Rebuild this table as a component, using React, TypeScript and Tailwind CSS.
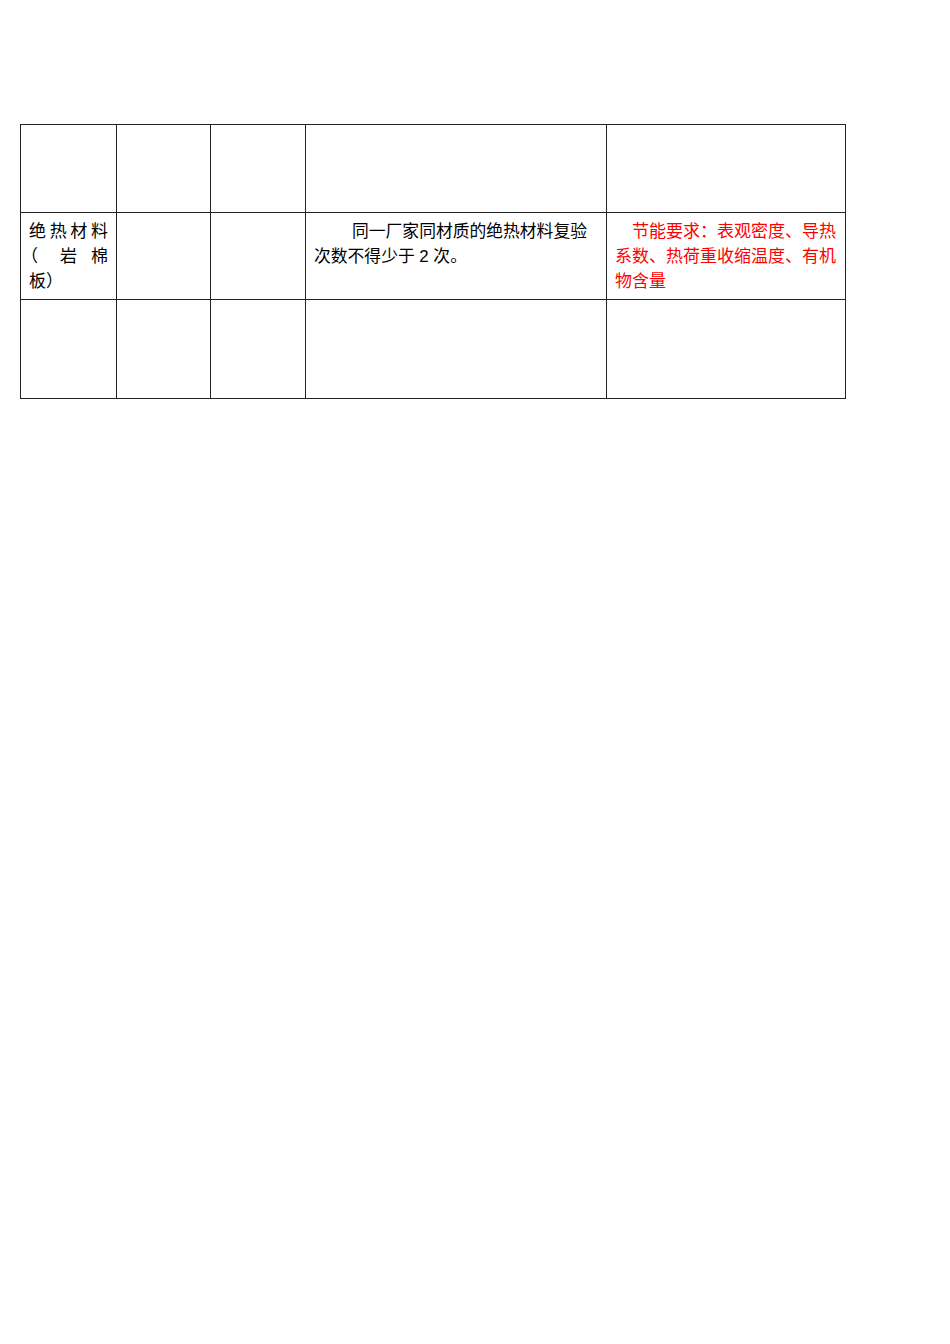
export default function App() {
  const font = "font-['Liberation_Sans','Noto_Sans_CJK_SC',sans-serif]";
  const cell = "border-l border-t border-[#222] px-[8px] pt-[6px] text-[17px] leading-[25px]";

  return (
    <div className={`min-h-[1344px] w-[950px] bg-white pt-[124px] pl-[20px] text-black ${font}`}>
      <div className="grid w-[826px] grid-cols-[96px_94px_95px_301px_239px] grid-rows-[88px_87px_99px] border-b border-r border-[#222]">
        {/* row 1 */}
        <div className={cell} />
        <div className={cell} />
        <div className={cell} />
        <div className={cell} />
        <div className={cell} />

        {/* row 2 */}
        <div className={cell}>
          <div className="flex justify-between">
            <span>绝</span>
            <span>热</span>
            <span>材</span>
            <span>料</span>
          </div>
          <div className="flex justify-between">
            <span className="-translate-x-[8px]">（</span>
            <span>岩</span>
            <span>棉</span>
          </div>
          <div>板）</div>
        </div>
        <div className={cell} />
        <div className={cell} />
        <div className={`${cell} indent-[38px] !text-[16.8px]`}>
          同一厂家同材质的绝热材料复验次数不得少于 2 次。
        </div>
        <div className={`${cell} text-justify indent-[17px] !pr-[9px] !text-[#f00]`}>
          节能要求：表观密度、导热系数、热荷重收缩温度、有机物含量
        </div>

        {/* row 3 */}
        <div className={cell} />
        <div className={cell} />
        <div className={cell} />
        <div className={cell} />
        <div className={cell} />
      </div>
    </div>
  );
}
